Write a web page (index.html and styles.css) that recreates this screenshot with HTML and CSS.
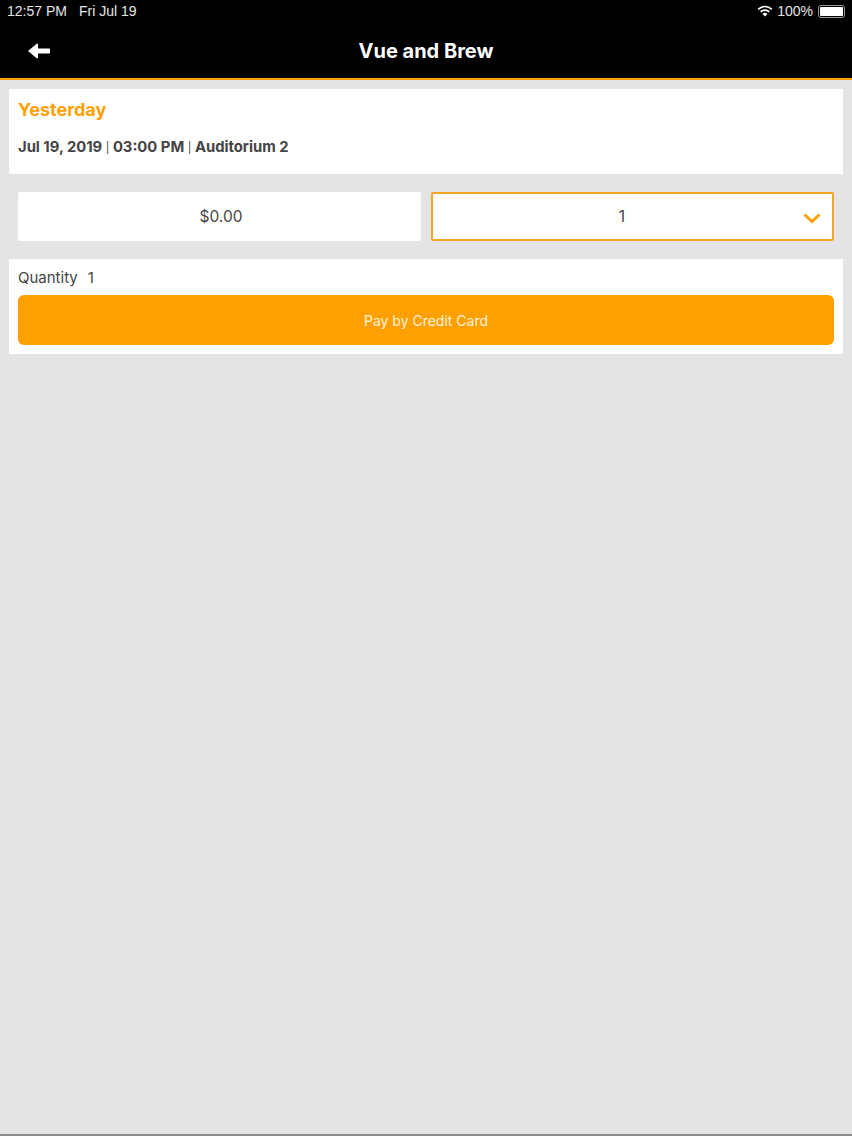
FILE: index.html
```html
<!DOCTYPE html>
<html lang="en">
<head>
    <meta charset="UTF-8">
    <meta name="viewport" content="width=device-width, initial-scale=1.0">
    <title>Vue and Brew</title>
    <link rel="stylesheet" href="styles.css">
</head>
<body>
  <!-- Status bar -->
  <div class="status-bar">
    <div class="status-left">
      <span>12:57 PM</span>
      <span>Fri Jul 19</span>
    </div>
    <div class="status-right">
      <svg class="wifi" width="16" height="12" viewBox="0 0 16 12">
        <path d="M8 11.5 5.6 8.9a3.4 3.4 0 0 1 4.8 0z" fill="#fff"/>
        <path d="M3.6 6.9a6.2 6.2 0 0 1 8.8 0" fill="none" stroke="#fff" stroke-width="1.7"/>
        <path d="M1.2 4.3a9.6 9.6 0 0 1 13.6 0" fill="none" stroke="#fff" stroke-width="1.7"/>
      </svg>
      <span>100%</span>
      <div class="battery"><div class="battery-fill"></div></div>
    </div>
  </div>

  <!-- Header -->
  <div class="header">
    <svg class="back" width="22" height="16" viewBox="0 0 22 16">
      <path d="M0 8 9 .5 10 1v4.500h11.200q.8 0 .8 .8v3.400q0 .8-.8 .8H10V15l-1 .5z" fill="#fff"/>
    </svg>
    <h1>Vue and Brew</h1>
  </div>

  <!-- Show info -->
  <div class="card info-card">
    <h2>Yesterday</h2>
    <p class="show-meta">Jul 19, 2019 <i>|</i> 03:00 PM <i>|</i> Auditorium 2</p>
  </div>

  <!-- Price and quantity -->
  <div class="fields">
    <div class="field field-price">$0.00</div>
    <div class="field field-select">
      1
      <svg class="chevron" width="18" height="11" viewBox="0 0 18 11">
        <path d="M1.500 1.500 9 8.500l7.500-7" fill="none" stroke="#ff9f00" stroke-width="3"/>
      </svg>
    </div>
  </div>

  <!-- Payment -->
  <div class="card pay-card">
    <div class="quantity"><span>Quantity</span><span>1</span></div>
    <button class="pay-button">Pay by Credit Card</button>
  </div>
</body>
</html>
```

FILE: styles.css
```css
/* Global Styles */
body {
    font-family: "Inter", "Noto Sans", sans-serif;
    margin: 0;
    box-sizing: border-box;
    height: 1136px;
    overflow: hidden;
    background-color: #e4e3e5;
    border-bottom: 2px solid #8c8c8c;
    color: #444;
}

/* Status bar */
.status-bar {
    display: flex;
    justify-content: space-between;
    align-items: center;
    height: 22px;
    padding: 0 7px;
    background-color: #000;
    color: #e6e6e6;
    font-family: "Liberation Sans", sans-serif;
    font-size: 14px;
}

.status-left {
    display: flex;
    gap: 12px;
}

.status-right {
    display: flex;
    align-items: center;
    gap: 4px;
}

.battery {
    width: 27px;
    height: 13px;
    margin-left: 1px;
    padding: 1px;
    box-sizing: border-box;
    border: 1px solid #999;
    border-radius: 3px;
}

.battery-fill {
    height: 100%;
    background-color: #fff;
    border-radius: 1px;
}

/* Header */
.header {
    display: flex;
    align-items: center;
    justify-content: center;
    position: relative;
    height: 56px;
    background-color: #000;
    border-bottom: 2px solid #ff9f00;
}

.header h1 {
    margin: 1px 0 0;
    font-size: 20px;
    font-weight: 700;
    color: #fff;
}

.back {
    position: absolute;
    left: 28px;
    top: 21px;
}

/* Cards */
.card {
    margin: 0 9px;
    padding: 0 9px;
    background-color: #fff;
}

.info-card {
    margin-top: 9px;
    height: 85px;
    box-sizing: border-box;
    padding-top: 10px;
}

.info-card h2 {
    margin: 0;
    font-size: 18px;
    line-height: 22px;
    font-weight: 700;
    color: #ff9f00;
}

.show-meta {
    margin: 16px 0 0;
    font-size: 14.8px;
    line-height: 20px;
    font-weight: 700;
}

.show-meta i {
    font-style: normal;
    font-weight: 400;
    font-size: 11px;
    color: #444;
}

/* Fields */
.fields {
    display: grid;
    grid-template-columns: 403px 403px;
    gap: 10px;
    margin: 18px 18px;
}

.field {
    display: flex;
    align-items: center;
    justify-content: center;
    position: relative;
    height: 49px;
    box-sizing: border-box;
    background-color: #fff;
    border-radius: 2px;
    font-size: 15.500px;
}

.field-price {
    padding-left: 3px;
}

.field-select {
    border: 2px solid #f5a623;
    padding-right: 21px;
}

.chevron {
    position: absolute;
    right: 11px;
    top: 19px;
}

/* Payment */
.pay-card {
    height: 95px;
    box-sizing: border-box;
    padding-top: 9px;
}

.quantity {
    display: flex;
    gap: 10px;
    font-size: 15px;
    line-height: 19px;
}

.pay-button {
    display: block;
    width: 100%;
    height: 50px;
    margin-top: 8px;
    border: none;
    border-radius: 6px;
    background-color: #ff9f00;
    color: #fff3dc;
    font-family: inherit;
    font-size: 14px;
}
```
